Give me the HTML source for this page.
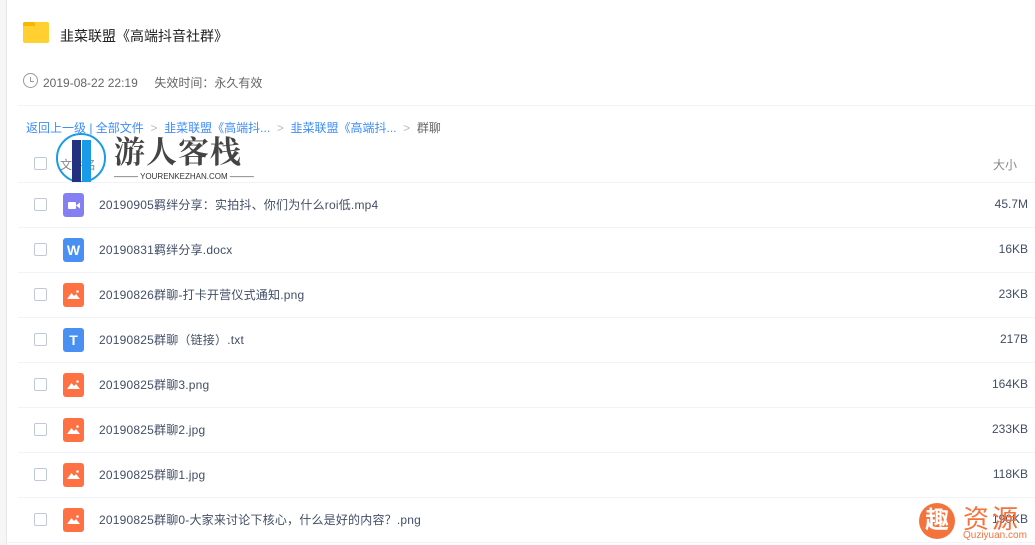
<!DOCTYPE html><html><head><meta charset="utf-8"><style>
*{margin:0;padding:0;box-sizing:border-box}
body{width:1035px;height:545px;overflow:hidden;background:#fff;font-family:"Liberation Sans","Noto Sans CJK SC",sans-serif;position:relative;color:#424e67}
.side{position:absolute;left:0;top:0;width:7px;height:545px;background:#f6f6f6;border-right:1px solid #e6e6e6}
.abs{position:absolute}
.row{position:absolute;left:18px;width:1017px;height:45px;border-top:1px solid #f1f3f8}
.cb{position:absolute;left:16px;width:13px;height:13px;border:1px solid #bfcad8;border-radius:2px;top:15px}
.ic{position:absolute;left:45px;top:10px;width:21px;height:24px;border-radius:3px;color:#fff;font-size:14px;font-weight:bold;text-align:center;line-height:25px}
.ic svg{position:absolute;left:0;top:0}
.nm{position:absolute;left:81px;top:13px;font-size:12px;color:#424e67;letter-spacing:0.2px}
.sz{position:absolute;right:7px;top:14px;font-size:12px;color:#424e67}
</style></head><body>
<div class="side"></div>
<div class="abs" style="left:23px;top:22px;width:26px;height:21px;background:#ffd02f;border-radius:2px"></div>
<div class="abs" style="left:23px;top:22px;width:12px;height:4px;background:#f5b800;border-radius:2px 2px 0 0"></div>
<div class="abs" style="left:60px;top:26px;font-size:14px;color:#222">韭菜联盟《高端抖音社群》</div>
<div class="abs" style="left:23px;top:73px;width:15px;height:15px;border:1.5px solid #999;border-radius:50%"></div>
<div class="abs" style="left:30px;top:77px;width:4px;height:5px;border-left:1.5px solid #999;border-bottom:1.5px solid #999"></div>
<div class="abs" style="left:43px;top:74px;font-size:12px;color:#666">2019-08-22 22:19&nbsp;&nbsp;&nbsp;&nbsp;&nbsp;失效时间：永久有效</div>
<div class="abs" style="left:18px;top:105px;width:1017px;height:1px;background:#f1f3f8"></div>
<div class="abs" style="left:26px;top:119px;font-size:12px;color:#3b8cff;white-space:nowrap">返回上一级 | 全部文件 <span style="color:#bbb">&nbsp;&gt;&nbsp;</span> 韭菜联盟《高端抖... <span style="color:#bbb">&nbsp;&gt;&nbsp;</span> 韭菜联盟《高端抖... <span style="color:#bbb">&nbsp;&gt;&nbsp;</span> <span style="color:#666">群聊</span></div>
<div class="cb" style="left:34px;top:157px"></div>
<div class="abs" style="left:60px;top:156px;font-size:12px;color:#888">文件名</div>
<div class="abs" style="right:18px;top:156px;font-size:12px;color:#888">大小</div>
<!-- watermark -->
<div class="abs" style="left:56px;top:133px;width:50px;height:50px;border:2px solid #1a9be8;border-radius:50%"></div>
<div class="abs" style="left:72px;top:140px;width:9px;height:43px;background:#23327e"></div>
<div class="abs" style="left:82px;top:140px;width:9px;height:43px;background:#1a9be8"></div>
<div class="abs" style="left:114px;top:132px;font-size:31px;font-weight:bold;color:#444;font-family:'Noto Serif CJK SC',serif;letter-spacing:1px;line-height:36px">游人客栈</div>
<div class="abs" style="left:114px;top:172px;font-size:8px;color:#333;white-space:nowrap">——— YOURENKEZHAN.COM ———</div>

<div class="row" style="top:182px"><div class="cb"></div><div class="ic" style="background:#8480f2"><svg width="21" height="24"><rect x="5" y="9" width="8" height="7" rx="1" fill="#fff"/><path d="M13 12.5L17 9.5V15.5Z" fill="#fff"/></svg></div><div class="nm">20190905羁绊分享：实拍抖、你们为什么roi低.mp4</div><div class="sz">45.7M</div></div>
<div class="row" style="top:227px"><div class="cb"></div><div class="ic" style="background:#4a8ff2">W</div><div class="nm">20190831羁绊分享.docx</div><div class="sz">16KB</div></div>
<div class="row" style="top:272px"><div class="cb"></div><div class="ic" style="background:#ff7043"><svg width="21" height="24"><path d="M4 16L8.5 10L11 13L13 11L17 16Z" fill="#fff"/><circle cx="14.5" cy="8.5" r="1.3" fill="#fff"/></svg></div><div class="nm">20190826群聊-打卡开营仪式通知.png</div><div class="sz">23KB</div></div>
<div class="row" style="top:317px"><div class="cb"></div><div class="ic" style="background:#4a8ff2">T</div><div class="nm">20190825群聊（链接）.txt</div><div class="sz">217B</div></div>
<div class="row" style="top:362px"><div class="cb"></div><div class="ic" style="background:#ff7043"><svg width="21" height="24"><path d="M4 16L8.5 10L11 13L13 11L17 16Z" fill="#fff"/><circle cx="14.5" cy="8.5" r="1.3" fill="#fff"/></svg></div><div class="nm">20190825群聊3.png</div><div class="sz">164KB</div></div>
<div class="row" style="top:407px"><div class="cb"></div><div class="ic" style="background:#ff7043"><svg width="21" height="24"><path d="M4 16L8.5 10L11 13L13 11L17 16Z" fill="#fff"/><circle cx="14.5" cy="8.5" r="1.3" fill="#fff"/></svg></div><div class="nm">20190825群聊2.jpg</div><div class="sz">233KB</div></div>
<div class="row" style="top:452px"><div class="cb"></div><div class="ic" style="background:#ff7043"><svg width="21" height="24"><path d="M4 16L8.5 10L11 13L13 11L17 16Z" fill="#fff"/><circle cx="14.5" cy="8.5" r="1.3" fill="#fff"/></svg></div><div class="nm">20190825群聊1.jpg</div><div class="sz">118KB</div></div>
<div class="row" style="top:497px"><div class="cb"></div><div class="ic" style="background:#ff7043"><svg width="21" height="24"><path d="M4 16L8.5 10L11 13L13 11L17 16Z" fill="#fff"/><circle cx="14.5" cy="8.5" r="1.3" fill="#fff"/></svg></div><div class="nm">20190825群聊0-大家来讨论下核心，什么是好的内容？.png</div><div class="sz">190KB</div></div>
<div class="abs" style="left:0;top:542px;width:1035px;height:1px;background:#f1f3f8"></div>
<div class="abs" style="left:919px;top:503px;width:36px;height:36px;border-radius:50%;background:#f4733d;color:#fff;font-size:24px;text-align:center;line-height:36px;font-weight:bold">趣</div>
<div class="abs" style="left:963px;top:499px;font-size:26px;color:#f4733d;letter-spacing:3px">资源</div>
<div class="abs" style="left:963px;top:530px;font-size:10px;color:#f4733d">Quziyuan.com</div>
</body></html>
